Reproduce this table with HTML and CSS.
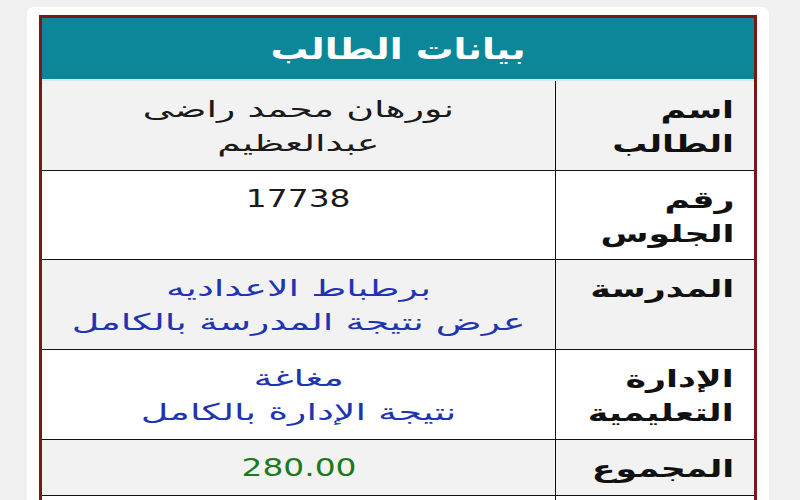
FILE: index.html
```html
<!DOCTYPE html>
<html lang="ar" dir="rtl">
<head>
<meta charset="utf-8">
<title>بيانات الطالب</title>
<link rel="stylesheet" href="styles.css">
</head>
<body>
<div class="card">
  <table class="student">
    <thead>
      <tr><th colspan="2" class="head"><span class="wide-head">بيانات الطالب</span></th></tr>
    </thead>
    <tbody>
      <tr class="odd">
        <th class="label"><span class="wide-label">اسم<br>الطالب</span></th>
        <td class="value"><span class="wide-value">نورهان محمد راضى<br>عبدالعظيم</span></td>
      </tr>
      <tr class="even">
        <th class="label"><span class="wide-label">رقم<br>الجلوس</span></th>
        <td class="value"><span class="wide-num">17738</span></td>
      </tr>
      <tr class="odd">
        <th class="label"><span class="wide-label">المدرسة</span></th>
        <td class="value blue"><span class="wide-value">برطباط الاعداديه<br><a class="link" href="#">عرض نتيجة المدرسة بالكامل</a></span></td>
      </tr>
      <tr class="even">
        <th class="label"><span class="wide-label">الإدارة<br>التعليمية</span></th>
        <td class="value blue"><span class="wide-value">مغاغة<br><a class="link" href="#">نتيجة الإدارة بالكامل</a></span></td>
      </tr>
      <tr class="odd">
        <th class="label"><span class="wide-label">المجموع</span></th>
        <td class="value green"><span class="wide-num">280.00</span></td>
      </tr>
      <tr class="even">
        <th class="label empty"></th>
        <td class="value empty"></td>
      </tr>
    </tbody>
  </table>
</div>
</body>
</html>
```

FILE: styles.css
```css
html, body {
  margin: 0;
  padding: 0;
  background: #f1f1f1;
}
body {
  padding: 7px 31px 0 27px;
  font-family: "DejaVu Sans", "Noto Sans", sans-serif;
  height: 500px;
  overflow: hidden;
  box-sizing: border-box;
}
.card {
  background: #ffffff;
  border-radius: 7px;
  padding: 8px 12px 0 12px;
  height: 600px;
}
.student {
  width: 100%;
  border-collapse: collapse;
  border: 3px solid #7a1818;
  direction: rtl;
}
.head {
  background: #0b8799;
  color: #ffffff;
  font-size: 29px;
  font-weight: bold;
  height: 61px;
  padding: 0;
  border-bottom: 2px solid #d4ecf0;
  text-align: center;
  vertical-align: middle;
}
.wide-head {
  display: inline-block;
  transform: scaleX(1.3);
}
.odd { background: #f2f2f2; }
.even { background: #ffffff; }
.label {
  width: 168px;
  text-align: right;
  vertical-align: top;
  font-size: 24px;
  font-weight: bold;
  color: #111111;
  line-height: 34px;
  padding: 12px 20px 8px 10px;
  border: 1px solid #111111;
  border-right: 3px solid #7a1818;
}
.wide-label {
  display: inline-block;
  transform: scaleX(1.45);
  transform-origin: right center;
}
.value {
  text-align: center;
  vertical-align: top;
  font-size: 23px;
  color: #1a1a1a;
  line-height: 34px;
  padding: 11px 10px 10px 10px;
  border: 1px solid #111111;
  border-left: 3px solid #7a1818;
}
.empty {
  height: 40px;
}
.wide-value {
  display: inline-block;
  transform: scaleX(1.65);
}
.wide-num {
  display: inline-block;
  font-size: 24px;
  transform: scaleX(1.37);
}
.blue { color: #1f35b0; }
.link {
  color: #1f35b0;
  text-decoration: none;
}
.green { color: #1c7a1c; }
```
